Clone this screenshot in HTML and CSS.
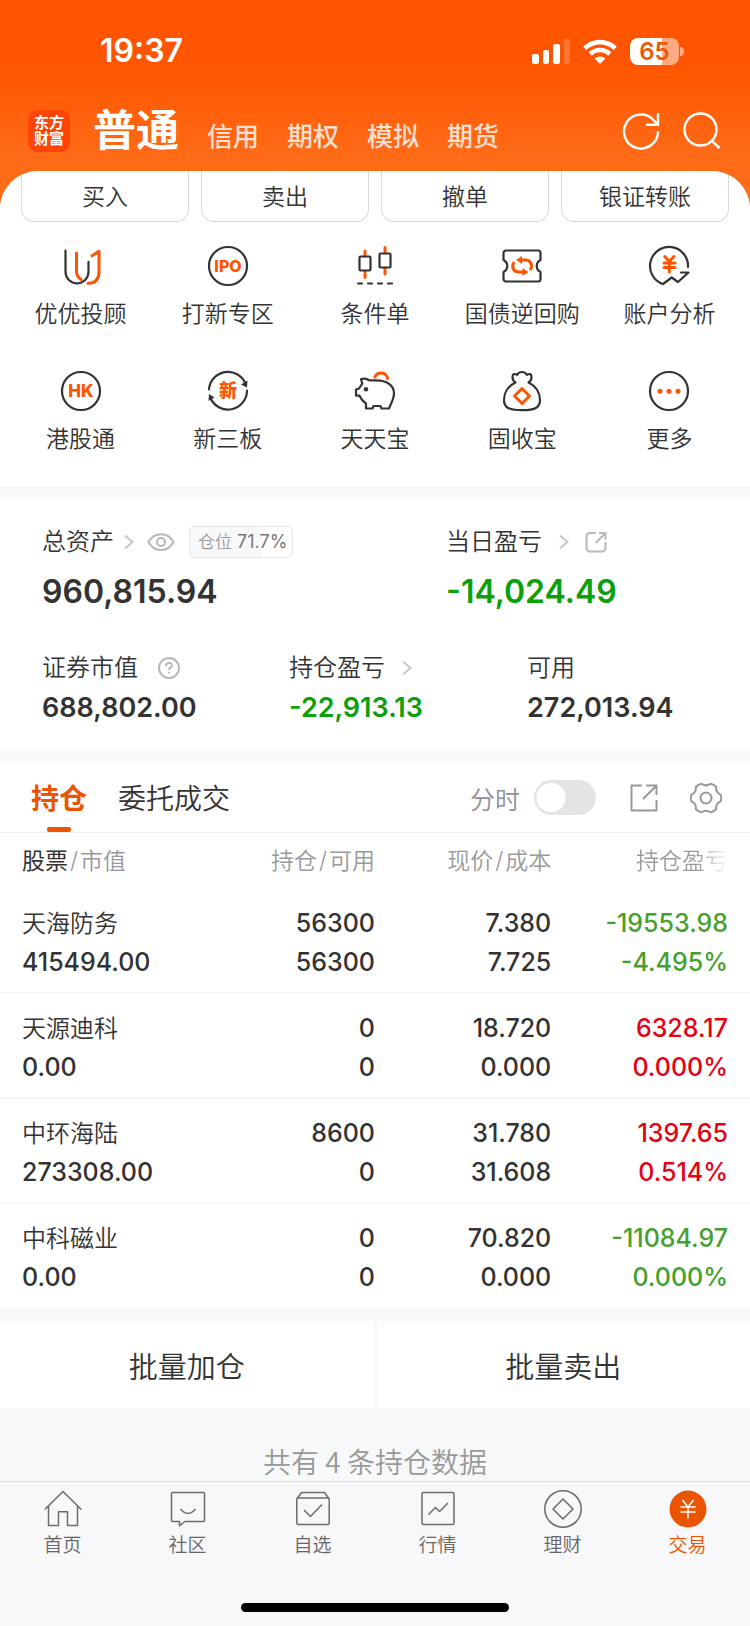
FILE: index.html
```html
<!DOCTYPE html>
<html lang="zh-CN">
<head>
<meta charset="utf-8">
<meta name="viewport" content="width=device-width, initial-scale=1">
<title>普通交易</title>
<link rel="stylesheet" href="styles.css">
</head>
<body>
<div class="app">
  <div class="status">
    <time class="clock">19:37</time>
    <div class="status-icons">
      <svg width="38" height="25" viewBox="0 0 38 25" fill="#fff" aria-hidden="true"><rect x="0" y="15" width="7" height="10" rx="2"/><rect x="11" y="11" width="6" height="14" rx="2"/><rect x="21" y="5" width="7" height="20" rx="2"/><rect x="32" y="0" width="6" height="25" rx="2" opacity=".2"/></svg>
      <svg width="34" height="25" viewBox="0 0 34 25" fill="none" stroke="#fff" stroke-width="4.6" aria-hidden="true"><path d="M1.8 9.3a21.8 21.8 0 0 1 30.4 0"/><path d="M7.2 15a14 14 0 0 1 19.6 0"/><path d="M17 25l-5.3-5.4a7.6 7.6 0 0 1 10.6 0z" fill="#fff" stroke="none"/></svg>
      <span class="battery"><span class="battery-body">65</span><span class="battery-cap"></span></span>
    </div>
  </div>

  <header class="header">
    <span class="logo">东方<br>财富</span>
    <nav class="modes">
      <a href="#" class="mode mode-on">普通</a>
      <a href="#" class="mode">信用</a>
      <a href="#" class="mode">期权</a>
      <a href="#" class="mode">模拟</a>
      <a href="#" class="mode">期货</a>
    </nav>
    <button class="icon-btn" aria-label="刷新"><svg width="38" height="38" viewBox="0 0 38 38" fill="none" stroke="#fff" stroke-width="2.4"><path d="M36 19.5A17 17 0 1 1 31.5 8L36 12.5M36 1v11.8H24"/></svg></button>
    <button class="icon-btn" aria-label="搜索"><svg width="38" height="38" viewBox="0 0 38 38" fill="none" stroke="#fff" stroke-width="2.4"><circle cx="17.5" cy="17.5" r="16"/><path d="M28.5 28.5l8 7.5"/></svg></button>
  </header>

  <main class="sheet">
    <div class="trade-row">
      <button class="trade-btn">买入</button>
      <button class="trade-btn">卖出</button>
      <button class="trade-btn">撤单</button>
      <button class="trade-btn">银证转账</button>
    </div>

    <nav class="tools">
      <a href="#" class="tool"><svg class="tool-icon" viewBox="0 0 40 40"><path class="k" d="M4.5 4.5v21.3a11.5 11.5 0 0 0 23 0v-10"/><path class="o" d="M15.500 7v18.700c0 3 1.600 5.600 4.500 7.800M27 37.200c7.500 0 11-4.500 11-11.500V5.300l-7 4.500"/></svg>优优投顾</a>
      <a href="#" class="tool"><svg class="tool-icon" viewBox="0 0 40 40"><circle class="k" cx="20" cy="20" r="19"/><text class="badge-ipo" x="20" y="26">IPO</text></svg>打新专区</a>
      <a href="#" class="tool"><svg class="tool-icon" viewBox="0 0 40 40"><path class="o" d="M10 5v5M10 25.500v6M30 1.500v5M30 22v6"/><rect class="k" x="4.500" y="10.500" width="11" height="14" rx="1"/><rect class="k" x="24.500" y="7.500" width="11" height="14" rx="1"/><path class="k" d="M3 37.500h4M13 37.500h4M23 37.500h4M33 37.500h4"/></svg>条件单</a>
      <a href="#" class="tool"><svg class="tool-icon" viewBox="0 0 40 40"><path class="k" d="M4 4.500h32a2.500 2.500 0 0 1 2.500 2.500v7c-5 2.500-5 9.500 0 12v7a2.500 2.500 0 0 1-2.500 2.500H4A2.500 2.500 0 0 1 1.500 33v-7c5-2.500 5-9.500 0-12V7A2.500 2.500 0 0 1 4 4.500z"/><path class="o" d="M11.500 17c-2.500 5 1 9 5 9h4M28.700 23c2.500-5-1-9-5-9h-4"/><path class="of" d="M20.500 22v8l6-4zM20 10v8L14 14z"/></svg>国债逆回购</a>
      <a href="#" class="tool"><svg class="tool-icon" viewBox="0 0 40 40"><path class="k" d="M39 21A19 19 0 1 0 14 38l8.700-6.500L29 36l10.500-9.500H32"/><path class="o" d="M15.700 10.500l4.600 5L25 10.500M20.300 15.500V26M15 17h11M15 21.500h11"/></svg>账户分析</a>
      <a href="#" class="tool"><svg class="tool-icon" viewBox="0 0 40 40"><circle class="k" cx="20" cy="20" r="19"/><text class="badge-hk" x="20" y="26">HK</text></svg>港股通</a>
      <a href="#" class="tool"><svg class="tool-icon" viewBox="0 0 40 40"><path class="k" d="M1 18.500A19 19 0 0 1 37.500 12.500M39 19.500A19 19 0 0 1 2.300 26.500"/><path class="kf" d="M39.500 9.500l-.5 7-6-3zM.5 30l.5-7 5.500 3.500z"/><text class="badge-xin" x="20" y="26">新</text></svg>新三板</a>
      <a href="#" class="tool"><svg class="tool-icon" viewBox="0 0 40 40"><path class="k" d="M6 8.300c2.500-1 5-.8 7.500.7 2 .8 4 .3 7.500.3 11 0 18 5 18 13 0 6-3 10-5 15.200h-7.500l-1-2.500h-7l-1 2.500H11v-5C8 30.500 6 28 4.500 24.700H1v-6.200l3-1 3.300-4.800z"/><circle class="kf" cx="11" cy="18.300" r="2.200"/><path class="o" d="M19.800 6c3-6 11.500-5 12.700 1.500"/></svg>天天宝</a>
      <a href="#" class="tool"><svg class="tool-icon" viewBox="0 0 40 40"><path class="k" d="M13.500 11.500c-1.500-1-3-3-3-5.500 0-3.500 2.300-3.500 4.500-2.200 2-2.800 3.500-2.800 5-2.800s3 0 5 2.800c2.200-1.300 4.500-1.300 4.500 2.200 0 2.500-1.500 4.500-3 5.500C34 15 38 22 38 29c0 7-4 10.200-18 10.200S2 36 2 29c0-7 4-14 11.500-17.500z"/><path class="o" d="M20 17.500l7.500 7.500-7.500 7.500-7.500-7.500z"/></svg>固收宝</a>
      <a href="#" class="tool"><svg class="tool-icon" viewBox="0 0 40 40"><circle class="k" cx="20" cy="20" r="19"/><g class="of"><circle cx="11" cy="20.300" r="2.500"/><circle cx="20" cy="20.300" r="2.500"/><circle cx="29" cy="20.300" r="2.500"/></g></svg>更多</a>
    </nav>

    <section class="assets">
      <div class="asset-main">
        <div>
          <div class="asset-label">总资产
            <svg class="chev" viewBox="0 0 10 16"><path d="M1 1.500L8.500 8 1 14.500"/></svg>
            <button class="plain" aria-label="隐藏金额"><svg width="28" height="20" viewBox="0 0 28 20" class="line"><path d="M1.500 10C7-.5 21-.5 26.500 10 21 20.500 7 20.500 1.500 10z"/><circle cx="14" cy="10" r="4"/></svg></button>
            <span class="position"><span>仓位</span> 71.7%</span>
          </div>
          <div class="amount-lg">960,815.94</div>
        </div>
        <div>
          <div class="asset-label">当日盈亏
            <svg class="chev chev-far" viewBox="0 0 10 16"><path d="M1 1.500L8.500 8 1 14.500"/></svg>
            <button class="plain" aria-label="分享盈亏"><svg width="22" height="22" viewBox="0 0 22 22" class="line"><path d="M11 2H5a3.500 3.500 0 0 0-3.500 3.500V17A3.500 3.500 0 0 0 5 20.500h12a3.500 3.500 0 0 0 3.500-3.500v-6M14 2h6.500v6.500M20 2.500l-9.500 9.500"/></svg></button>
          </div>
          <div class="amount-lg down">-14,024.49</div>
        </div>
      </div>
      <div class="asset-sub">
        <div>
          <div class="asset-label">证券市值 <button class="plain help" aria-label="说明"><svg width="22" height="22" viewBox="0 0 22 22" class="line"><circle cx="11" cy="11" r="10"/><path d="M8 9c0-4 6-4 6-.5 0 2-3 2.200-3 4.500M11 14.800v1.800"/></svg></button></div>
          <div class="amount">688,802.00</div>
        </div>
        <div>
          <div class="asset-label">持仓盈亏 <svg class="chev chev-far" viewBox="0 0 10 16"><path d="M1 1.500L8.500 8 1 14.500"/></svg></div>
          <div class="amount down">-22,913.13</div>
        </div>
        <div>
          <div class="asset-label">可用</div>
          <div class="amount">272,013.94</div>
        </div>
      </div>
    </section>

    <section class="holdings">
      <div class="tabs">
        <button class="tab tab-on">持仓</button>
        <button class="tab">委托成交</button>
        <label class="switch">分时<input type="checkbox" role="switch"></label>
        <button class="plain" aria-label="分享持仓"><svg width="28" height="28" viewBox="0 0 28 28" class="dark"><path d="M12 1.500H1.500v25h25V16M16 1.500h10.500V11M26 2L13 15"/></svg></button>
        <button class="plain gear" aria-label="设置"><svg width="32" height="32" viewBox="0 0 32 32" class="dark"><path d="M30.600 12.600q1.400 3.400 0 6.800-5.100 2.100-4.400 7.600-2.300 2.800-5.800 3.300Q16 27 11.600 30.300 8.100 29.800 5.800 27q.7-5.500-4.400-7.600-1.400-3.400 0-6.800Q6.500 10.500 5.800 5q2.300-2.800 5.800-3.300Q16 5 20.400 1.700 23.900 2.200 26.200 5q-.7 5.500 4.400 7.600z"/><circle cx="16" cy="16" r="5.500"/></svg></button>
      </div>
      <table class="grid">
        <colgroup><col class="c1"><col class="c2"><col class="c3"><col class="c4"></colgroup>
        <thead>
          <tr><th><b>股票</b><i>/</i>市值</th><th>持仓<i>/</i>可用</th><th>现价<i>/</i>成本</th><th><span class="fade">持仓盈亏</span></th></tr>
        </thead>
        <tbody>
          <tr><td><span class="name">天海防务</span>415494.00</td><td>56300<br>56300</td><td>7.380<br>7.725</td><td class="fall">-19553.98<br>-4.495%</td></tr>
          <tr><td><span class="name">天源迪科</span>0.00</td><td>0<br>0</td><td>18.720<br>0.000</td><td class="rise">6328.17<br>0.000%</td></tr>
          <tr><td><span class="name">中环海陆</span>273308.00</td><td>8600<br>0</td><td>31.780<br>31.608</td><td class="rise">1397.65<br>0.514%</td></tr>
          <tr><td><span class="name">中科磁业</span>0.00</td><td>0<br>0</td><td>70.820<br>0.000</td><td class="fall">-11084.97<br>0.000%</td></tr>
        </tbody>
      </table>
    </section>

    <div class="batch">
      <button class="batch-btn">批量加仓</button>
      <button class="batch-btn">批量卖出</button>
    </div>
    <p class="summary">共有 4 条持仓数据</p>
  </main>

  <footer class="bottom">
    <nav class="bar">
      <a href="#" class="bar-item"><svg class="bar-icon" viewBox="0 0 38 38"><path d="M.7 19.500L19 1.500l18.300 18M4.500 16v19.500h10V21.800h9v13.700h10V16"/></svg>首页</a>
      <a href="#" class="bar-item"><svg class="bar-icon" viewBox="0 0 38 38"><path d="M3.500 2.500h31a1 1 0 0 1 1 1v27a1 1 0 0 1-1 1H16l-5.500 4.200v-4.200h-7a1 1 0 0 1-1-1v-27a1 1 0 0 1 1-1zM11.500 18.800c4 6 11 6 15 0"/></svg>社区</a>
      <a href="#" class="bar-item"><svg class="bar-icon" viewBox="0 0 38 38"><path d="M2.800 9l4.700-6.500h23L35.200 9v23.500a2 2 0 0 1-2 2H4.800a2 2 0 0 1-2-2V9a1 1 0 0 1 1-1h30.400a1 1 0 0 1 1 1M10 20l6.500 6.500L28 14.500"/></svg>自选</a>
      <a href="#" class="bar-item"><svg class="bar-icon" viewBox="0 0 38 38"><rect x="3" y="2.500" width="32" height="32" rx="1.500"/><path d="M9.500 24.500l7-7 4 4 8.500-8.500"/></svg>行情</a>
      <a href="#" class="bar-item"><svg class="bar-icon" viewBox="0 0 38 38"><circle cx="19" cy="19" r="18.200"/><path d="M19 9l10 10-10 10L9 19z"/></svg>理财</a>
      <a href="#" class="bar-item bar-on"><svg class="bar-icon" viewBox="0 0 38 38"><circle cx="19" cy="19" r="18.500" fill="#ea5504" stroke="none"/><path stroke="#fff" d="M13.500 10l5.500 7 5.500-7M19 17v11.500M11.500 17h15M11.500 22h15"/></svg>交易</a>
    </nav>
    <div class="home-indicator"></div>
  </footer>
</div>
</body>
</html>
```

FILE: styles.css
```css
* { box-sizing: border-box; }

body {
  margin: 0;
  background: #f7f8fa;
  color: #333;
  font-family: Inter, "Noto Sans CJK SC", sans-serif;
  font-weight: 350;
}

button {
  margin: 0;
  padding: 0;
  border: 0;
  background: none;
  color: inherit;
  font: inherit;
}

a { color: inherit; text-decoration: none; }
svg { display: block; flex: none; }

.app {
  display: flex;
  flex-direction: column;
  min-height: 100vh;
  background: linear-gradient(#ff5500 65px, #ff6c18 160px) no-repeat top / 100% 220px;
}

/* status bar */
.status {
  display: flex;
  justify-content: space-between;
  align-items: center;
  padding: 31px 66px 0 100px;
  color: #fff;
}
.clock { font-size: 32px; line-height: 40px; font-weight: 600; }
.status-icons { display: flex; align-items: center; gap: 13px; }
.battery { display: flex; align-items: center; gap: 1px; }
.battery-body {
  width: 49px;
  border-radius: 8px;
  background: linear-gradient(90deg, #fff 65%, #ffaa80 65%);
  color: #e65a0a;
  font-size: 24px;
  line-height: 27px;
  font-weight: 600;
  text-align: center;
}
.battery-cap { width: 4px; height: 9px; border-radius: 0 4px 4px 0; background: #ffaa80; }

/* header */
.header {
  display: flex;
  align-items: center;
  gap: 23px;
  height: 100px;
  padding: 20px 29px 0 28px;
  color: #fff;
}
.logo {
  width: 42px;
  padding: 5px 0;
  border-radius: 9px;
  background: #ff4405;
  font-size: 15px;
  line-height: 16px;
  font-weight: 700;
  text-align: center;
}
.modes { display: flex; flex: 1; align-items: baseline; gap: 28px; padding-top: 5px; white-space: nowrap; }
.mode { color: #ffe0d0; font-size: 26px; line-height: 56px; font-weight: 500; }
.mode-on { color: #fff; font-size: 43px; font-weight: 700; }

/* white sheet */
.sheet {
  flex: 1;
  overflow: hidden;
  border-radius: 38px 38px 0 0;
  background: #f7f8fa;
}

.trade-row {
  display: grid;
  grid-template-columns: repeat(4, 1fr);
  gap: 12px;
  padding: 0 21px;
  background: #fff;
}
.trade-btn {
  height: 51px;
  padding-bottom: 2px;
  border: 1px solid #d9d9d9;
  border-top: 0;
  border-radius: 0 0 13px 13px;
  font-size: 23px;
}

.tools {
  display: grid;
  grid-template-columns: repeat(5, 1fr);
  row-gap: 39px;
  padding: 24px 7px 29px;
  background: #fff;
}
.tool {
  display: flex;
  flex-direction: column;
  align-items: center;
  gap: 10px;
  font-size: 23px;
  line-height: 36px;
  white-space: nowrap;
}
.tool-icon { width: 40px; height: 40px; overflow: visible; }
.k, .o { fill: none; stroke: #333; stroke-width: 2.2; stroke-linecap: round; stroke-linejoin: round; }
.o { stroke: #ff5500; stroke-width: 3; }
.of { fill: #ff5500; }
.kf { fill: #333; }
.badge-ipo, .badge-hk, .badge-xin { fill: #ff5500; font-weight: 800; text-anchor: middle; }
.badge-ipo { font-size: 16px; }
.badge-hk { font-size: 17px; }
.badge-xin { font-size: 18px; }

/* assets */
.assets {
  margin-top: 13px;
  padding: 27px 0 25px 42px;
  background: #fff;
}
.asset-main { display: grid; grid-template-columns: 404fr 304fr; }
.asset-sub { display: grid; grid-template-columns: 247fr 238fr 223fr; margin-top: 40px; }
.asset-label {
  display: flex;
  align-items: center;
  font-size: 24px;
  line-height: 32px;
  white-space: nowrap;
}
.chev { width: 10px; height: 16px; margin: 0 13px 0 10px; fill: none; stroke: #c8c8c8; stroke-width: 2; }
.chev-far { margin: 0 16px 0 17px; }
.help { margin-left: 20px; }
.line { fill: none; stroke: #b8b8b8; stroke-width: 2; }
.position {
  margin-left: 14px;
  padding: 0 5px 0 8px;
  border: 1px solid #e6e6e8;
  border-radius: 5px;
  background: linear-gradient(90deg, #f7f8fa 71%, #fff 71%);
  color: #777;
  font-size: 18px;
  font-weight: 400;
  line-height: 30px;
}
.position span { color: #999; font-size: 17px; font-weight: 350; }
.amount-lg { margin-top: 14px; font-size: 32px; line-height: 40px; font-weight: 600; }
.amount { margin-top: 8px; font-size: 27px; line-height: 32px; font-weight: 600; }
.down { color: #0aa00a; }

/* holdings */
.holdings { margin-top: 14px; background: #fff; }
.tabs {
  display: flex;
  align-items: center;
  height: 70px;
  padding: 0 28px 0 31px;
  border-bottom: 1px solid #f0f0f2;
}
.tab { position: relative; margin-right: 31px; padding-top: 3px; font-size: 28px; line-height: 66px; }
.tab-on { color: #ea5504; font-weight: 700; }
.tab-on::after {
  content: "";
  position: absolute;
  bottom: 0;
  left: 50%;
  width: 24px;
  height: 5px;
  margin-left: -12px;
  border-radius: 2px;
  background: #ea5504;
}
.switch {
  display: flex;
  align-items: center;
  gap: 14px;
  margin: 0 34px 0 auto;
  color: #909096;
  font-size: 25px;
}
.switch input {
  appearance: none;
  width: 62px;
  height: 35px;
  margin: 0;
  border-radius: 18px;
  background: radial-gradient(circle at 17px 50%, #fff 14px, #e4e4e6 15px);
}
.dark { fill: none; stroke: #999; stroke-width: 2; stroke-linejoin: round; }
.gear { margin-left: 32px; }

.grid { width: 100%; border-collapse: collapse; table-layout: fixed; }
.c1, .c2 { width: 25%; }
.c3 { width: 23.5%; }
.c4 { width: 26.5%; }
.grid th {
  height: 56px;
  padding: 0 0 4px;
  color: #999;
  font-size: 23px;
  font-weight: 350;
  text-align: right;
  white-space: nowrap;
}
.grid th b { color: #333; font-weight: 400; }
.grid th i { padding: 0 2px; font-style: normal; }
.grid td {
  padding: 15px 0 10px;
  border-bottom: 2px solid #f7f7f9;
  font-size: 25px;
  line-height: 39px;
  font-weight: 550;
  text-align: right;
}
.grid th:first-child, .grid td:first-child { padding-left: 22px; text-align: left; }
.grid th:last-child, .grid td:last-child { padding-right: 22px; }
.name { display: block; font-size: 24px; font-weight: 350; }
.fade {
  background: linear-gradient(90deg, #999 65%, #fff 100%);
  background-clip: text;
  color: transparent;
}
.rise { color: #e60012; }
.fall { color: #45a02c; }

/* batch actions */
.batch { display: grid; grid-template-columns: 1fr 1fr; gap: 3px; margin-top: 12px; }
.batch-btn { height: 87px; background: #fff; font-size: 29px; }
.summary {
  margin: 0;
  padding-top: 33px;
  color: #999;
  font-family: "Noto Sans CJK SC", sans-serif;
  font-size: 28px;
  line-height: 40px;
  text-align: center;
}

/* bottom bar */
.bottom { padding-bottom: 14px; border-top: 1px solid #dedfe2; background: #f8f8fb; }
.bar { display: grid; grid-template-columns: repeat(6, 1fr); padding-top: 8px; }
.bar-item {
  display: flex;
  flex-direction: column;
  align-items: center;
  gap: 4px;
  color: #666;
  font-size: 19px;
  line-height: 28px;
}
.bar-icon { width: 38px; height: 38px; fill: none; stroke: #6b6b6b; stroke-width: 1.5; stroke-linejoin: round; }
.bar-on { color: #ea5504; }
.home-indicator { width: 268px; height: 9px; margin: 43px auto 0; border-radius: 5px; background: #000; }
```
